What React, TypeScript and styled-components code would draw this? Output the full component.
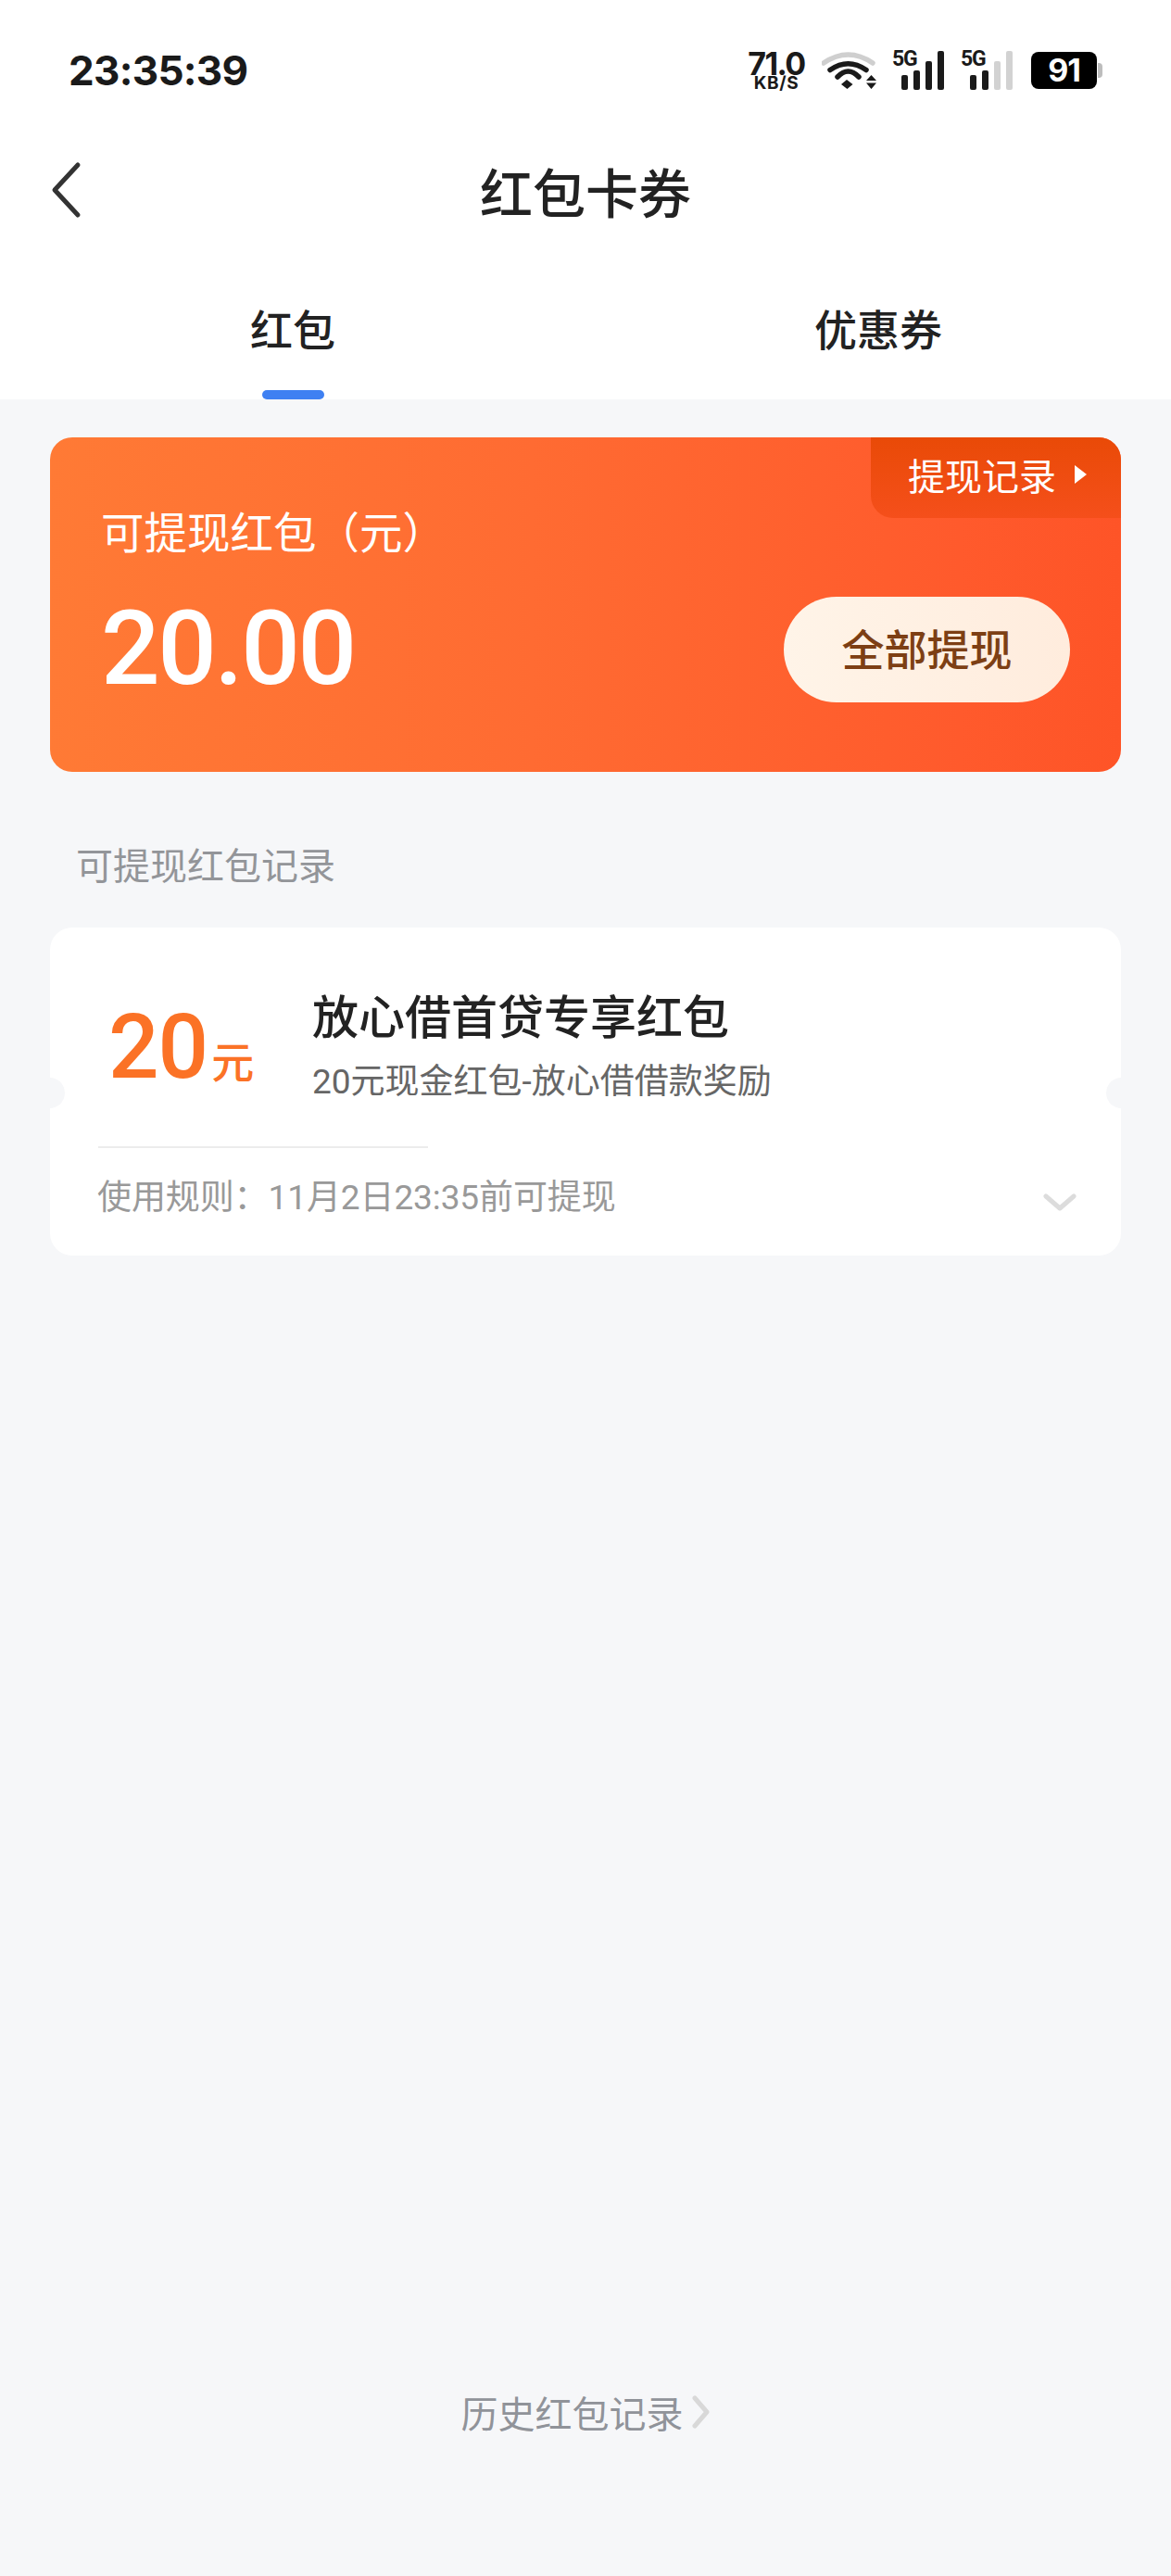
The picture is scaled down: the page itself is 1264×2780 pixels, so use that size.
import React from "react";
import styled, { createGlobalStyle } from "styled-components";

const Global = createGlobalStyle`
  html, body { margin: 0; padding: 0; background: #f6f7f9; }
  * { box-sizing: border-box; }
  body { font-family: Roboto, "Noto Sans CJK SC", sans-serif; }
`;

const Page = styled.div`
  width: 1264px;
  height: 2780px;
  display: flex;
  flex-direction: column;
  background: #f6f7f9;
  overflow: hidden;
`;
const Header = styled.header`
  background: #fff;
  display: flex;
  flex-direction: column;
`;
const StatusBar = styled.div`
  height: 149px;
  padding: 3px 74px 0 74px;
  display: flex;
  align-items: center;
  justify-content: space-between;
`;
const Clock = styled.span`
  font: 700 44px/50px Inter, sans-serif;
  letter-spacing: -0.7px;
  color: #1a1a1a;
`;
const Indicators = styled.div`
  display: flex;
  align-items: center;
  color: #1a1a1a;
`;
const Speed = styled.div`
  display: flex;
  flex-direction: column;
  align-items: center;
  width: 62px;
  margin-right: 18px;
`;
const SpeedValue = styled.span`
  font: 700 34px/27px Inter, sans-serif;
  letter-spacing: -1.6px;
`;
const SpeedUnit = styled.span`
  font: 700 19px/15px Inter, sans-serif;
  letter-spacing: 0.6px;
`;
const Battery = styled.div`
  position: relative;
  width: 71px;
  height: 40px;
  margin: 0 6px 0 20px;
  border-radius: 8px;
  background: #000;
  color: #fff;
  font: 700 34px/40px Inter, sans-serif;
  letter-spacing: -1px;
  text-align: center;
  &::after {
    content: "";
    position: absolute;
    left: 72px;
    top: 12px;
    width: 5px;
    height: 16px;
    border-radius: 0 4px 4px 0;
    background: #bdbdbd;
  }
`;
const NavBar = styled.nav`
  height: 112px;
  padding: 0 54px;
  display: grid;
  grid-template-columns: 1fr auto 1fr;
  align-items: center;
`;
const BackIcon = styled.svg`
  display: block;
  width: 34px;
  height: 62px;
`;
const Title = styled.h1`
  margin: 0;
  font: 500 57px/70px "Noto Sans CJK SC", sans-serif;
  color: #222;
`;
const Tabs = styled.div`
  height: 170px;
  display: grid;
  grid-template-columns: 1fr 1fr;
`;
const Tab = styled.div`
  padding-top: 67px;
  display: flex;
  flex-direction: column;
  align-items: center;
`;
const TabLabel = styled.span`
  font: 500 46px/50px "Noto Sans CJK SC", sans-serif;
  color: #222;
`;
const TabMark = styled.i<{ $active?: boolean }>`
  display: block;
  width: 67px;
  height: 10px;
  margin-top: auto;
  border-radius: 5px;
  background: ${(p) => (p.$active ? "#3f80f2" : "transparent")};
`;
const Main = styled.main`
  flex: 1;
  padding: 41px 54px 0;
  display: flex;
  flex-direction: column;
`;
const BalanceCard = styled.section`
  position: relative;
  height: 361px;
  padding: 70px 55px 0 55px;
  border-radius: 24px;
  overflow: hidden;
  color: #fff;
  background: linear-gradient(90deg, #ff7a35 0%, #ff6b32 45%, #ff5a2c 85%, #fe5427 100%);
`;
const RecordTag = styled.div`
  position: absolute;
  top: 0;
  right: 0;
  width: 270px;
  height: 87px;
  padding: 0 0 8px 40px;
  display: flex;
  align-items: center;
  gap: 19px;
  border-bottom-left-radius: 24px;
  background: linear-gradient(180deg, #e94a07, #f54f1b);
  font: 400 40px/50px "Noto Sans CJK SC", sans-serif;
`;
const TagArrow = styled.svg`
  width: 15px;
  height: 22px;
  display: block;
`;
const BalanceLabel = styled.div`
  font: 400 46.5px/60px "Noto Sans CJK SC", sans-serif;
  text-spacing-trim: space-all;
`;
const BalanceRow = styled.div`
  margin-top: 33px;
  display: flex;
  align-items: center;
  justify-content: space-between;
`;
const BalanceAmount = styled.div`
  font: 500 112px/130px Roboto, sans-serif;
  letter-spacing: -2.4px;
`;
const WithdrawButton = styled.button`
  width: 309px;
  height: 114px;
  margin-top: 2px;
  padding: 0 0 6px;
  border: 0;
  border-radius: 57px;
  background: linear-gradient(90deg, #fff4e8, #ffecdd);
  color: #7d3f14;
  font: 500 46px/50px "Noto Sans CJK SC", sans-serif;
`;
const SectionLabel = styled.div`
  margin: 74px 0 44px 28px;
  font: 400 40px/50px "Noto Sans CJK SC", sans-serif;
  color: #939599;
`;
const Coupon = styled.section`
  position: relative;
  height: 354px;
  padding: 61px 0 0 66px;
  border-radius: 24px;
  background: #fff;
`;
const Notch = styled.i<{ $side: "left" | "right" }>`
  position: absolute;
  top: 162px;
  ${(p) => p.$side}: -17px;
  width: 33px;
  height: 33px;
  border-radius: 50%;
  background: #f6f7f9;
`;
const CouponTop = styled.div`
  display: flex;
`;
const CouponValue = styled.div`
  width: 220px;
  height: 127px;
  margin-left: -3px;
  padding-top: 13px;
  display: flex;
  align-items: baseline;
  color: #fb7226;
`;
const ValueNumber = styled.span`
  font: 500 96px/110px Roboto, sans-serif;
  letter-spacing: -1px;
`;
const ValueUnit = styled.span`
  margin-left: 4px;
  font: 500 46px/50px "Noto Sans CJK SC", sans-serif;
`;
const CouponInfo = styled.div`
  display: flex;
  flex-direction: column;
`;
const CouponTitle = styled.div`
  font: 500 50px/64px "Noto Sans CJK SC", sans-serif;
  color: #222;
`;
const CouponDesc = styled.div`
  margin-top: 20px;
  font: 400 37px/43px Roboto, "Noto Sans CJK SC", sans-serif;
  color: #666;
`;
const CouponDivider = styled.hr`
  width: 356px;
  height: 2px;
  margin: 48px 0 0 -14px;
  border: 0;
  background: #ececec;
`;
const RuleRow = styled.div`
  margin: 32px 0 0 -15px;
  padding-right: 48px;
  display: flex;
  align-items: center;
  justify-content: space-between;
`;
const RuleText = styled.span`
  font: 400 37px/44px Roboto, "Noto Sans CJK SC", sans-serif;
  letter-spacing: -0.1px;
  color: #999;
`;
const ChevronDown = styled.svg`
  display: block;
  width: 36px;
  height: 20px;
  margin-top: 10px;
`;
const Footer = styled.footer`
  margin-top: auto;
  padding-bottom: 152px;
  display: flex;
  align-items: center;
  justify-content: center;
  gap: 9px;
  font: 400 40px/50px "Noto Sans CJK SC", sans-serif;
  color: #909399;
`;
const ChevronRight = styled.svg`
  display: block;
  width: 20px;
  height: 36px;
`;
const SignalBox = styled.div`
  position: relative;
  width: 56px;
  height: 42px;
  & + & { margin-left: 18px; }
`;
const SignalLabel = styled.span`
  position: absolute;
  left: 0;
  top: 0;
  font: 700 23px/17px Roboto, sans-serif;
  letter-spacing: -1.2px;
  color: #1a1a1a;
`;
const SignalBars = styled.svg`
  display: block;
  width: 56px;
  height: 42px;
`;
const WifiSvg = styled.svg`
  display: block;
  width: 59px;
  height: 40px;
  margin-right: 17px;
`;

function Signal({ lit }: { lit: number }) {
  const bars = [
    { x: 10, y: 26 },
    { x: 23, y: 21 },
    { x: 36, y: 11 },
    { x: 49, y: 0 },
  ];
  return (
    <SignalBox>
      <SignalBars viewBox="0 0 56 42">
        {bars.map((b, i) => (
          <rect key={b.x} x={b.x} y={b.y} width="7" height={42 - b.y} rx="2" fill={i < lit ? "#1a1a1a" : "#d2d2d2"} />
        ))}
      </SignalBars>
      <SignalLabel>5G</SignalLabel>
    </SignalBox>
  );
}

export default function App() {
  return (
    <Page>
      <Global />
      <Header>
        <StatusBar>
          <Clock>23:35:39</Clock>
          <Indicators>
            <Speed>
              <SpeedValue>71.0</SpeedValue>
              <SpeedUnit>KB/S</SpeedUnit>
            </Speed>
            <WifiSvg viewBox="0 0 59 40" fill="none">
              <path d="M2 12 Q28.5 -6 55 12" stroke="#cfcfcf" strokeWidth="5.5" strokeLinecap="round" />
              <path d="M9 19.5 Q28.5 6 48 19.5" stroke="#1a1a1a" strokeWidth="5.5" strokeLinecap="round" />
              <path d="M17 27 Q28.5 15 40 27" stroke="#1a1a1a" strokeWidth="5.5" strokeLinecap="round" />
              <path d="M27 30 L33.5 35 L27.5 40 L21 35 Z" fill="#1a1a1a" />
              <path d="M53.5 25 L59 31 L48 31 Z M48 33.5 L59 33.5 L53.5 40 Z" fill="#1a1a1a" />
            </WifiSvg>
            <Signal lit={4} />
            <Signal lit={2} />
            <Battery>91</Battery>
          </Indicators>
        </StatusBar>
        <NavBar>
          <BackIcon viewBox="0 0 34 62" fill="none">
            <path d="M30 4 L5 31 L30 58" stroke="#333" strokeWidth="5" strokeLinecap="round" strokeLinejoin="round" />
          </BackIcon>
          <Title>红包卡券</Title>
        </NavBar>
        <Tabs>
          <Tab>
            <TabLabel>红包</TabLabel>
            <TabMark $active />
          </Tab>
          <Tab>
            <TabLabel>优惠券</TabLabel>
            <TabMark />
          </Tab>
        </Tabs>
      </Header>
      <Main>
        <BalanceCard>
          <RecordTag>
            提现记录
            <TagArrow viewBox="0 0 15 22">
              <path d="M1 1 L14 11 L1 21 Z" fill="#fff" />
            </TagArrow>
          </RecordTag>
          <BalanceLabel>可提现红包（元）</BalanceLabel>
          <BalanceRow>
            <BalanceAmount>20.00</BalanceAmount>
            <WithdrawButton>全部提现</WithdrawButton>
          </BalanceRow>
        </BalanceCard>
        <SectionLabel>可提现红包记录</SectionLabel>
        <Coupon>
          <Notch $side="left" />
          <Notch $side="right" />
          <CouponTop>
            <CouponValue>
              <ValueNumber>20</ValueNumber>
              <ValueUnit>元</ValueUnit>
            </CouponValue>
            <CouponInfo>
              <CouponTitle>放心借首贷专享红包</CouponTitle>
              <CouponDesc>20元现金红包-放心借借款奖励</CouponDesc>
            </CouponInfo>
          </CouponTop>
          <CouponDivider />
          <RuleRow>
            <RuleText>使用规则：11月2日23:35前可提现</RuleText>
            <ChevronDown viewBox="0 0 36 20" fill="none">
              <path d="M3 3 L18 16 L33 3" stroke="#dcdcdc" strokeWidth="5" strokeLinecap="round" strokeLinejoin="round" />
            </ChevronDown>
          </RuleRow>
        </Coupon>
        <Footer>
          历史红包记录
          <ChevronRight viewBox="0 0 20 36" fill="none">
            <path d="M3 3 L16 18 L3 33" stroke="#d8d8d8" strokeWidth="5" strokeLinecap="round" strokeLinejoin="round" />
          </ChevronRight>
        </Footer>
      </Main>
    </Page>
  );
}
